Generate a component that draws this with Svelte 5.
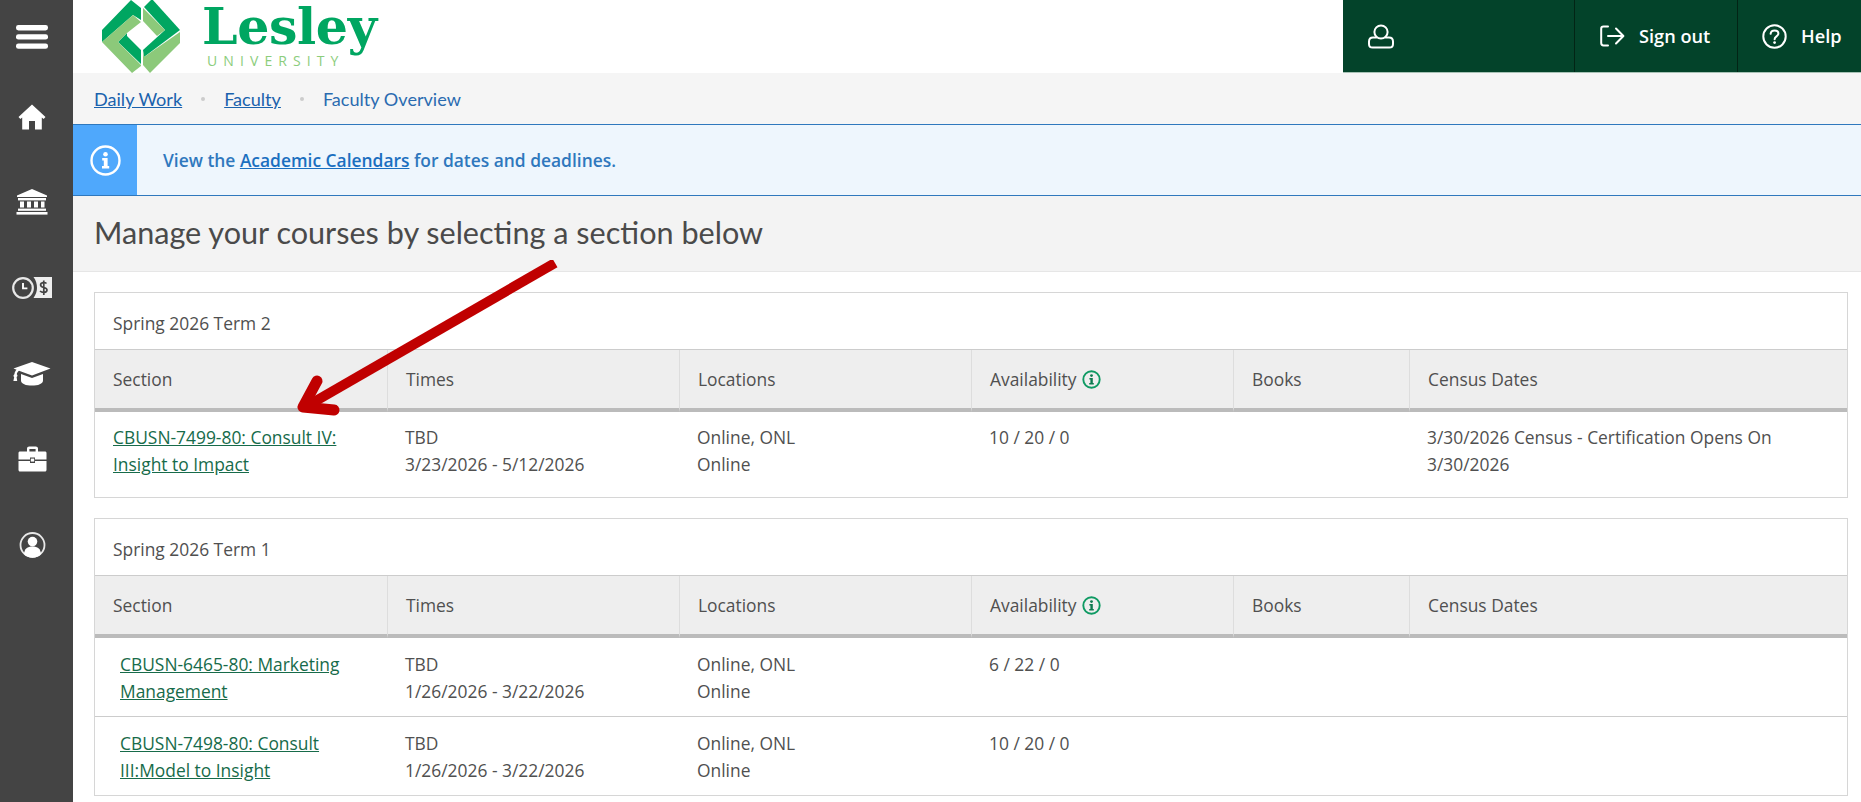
<script lang="ts">
	const terms = [
		{
			title: 'Spring 2026 Term 2',
			rows: [
				{
					section: 'CBUSN-7499-80: Consult IV: Insight to Impact',
					dates: '3/23/2026 - 5/12/2026',
					seats: '10 / 20 / 0',
					census: '3/30/2026 Census - Certification Opens On 3/30/2026'
				}
			]
		},
		{
			title: 'Spring 2026 Term 1',
			rows: [
				{
					section: 'CBUSN-6465-80: Marketing Management',
					dates: '1/26/2026 - 3/22/2026',
					seats: '6 / 22 / 0',
					census: ''
				},
				{
					section: 'CBUSN-7498-80: Consult III:Model to Insight',
					dates: '1/26/2026 - 3/22/2026',
					seats: '10 / 20 / 0',
					census: ''
				}
			]
		}
	];
</script>

<div class="page">
	<nav class="rail">
		<div class="rail-top">
			<svg width="32" height="24" viewBox="0 0 32 24" fill="#fff">
				<rect x="0" y="0" width="32" height="5.4" rx="2.4" />
				<rect x="0" y="9.2" width="32" height="5.4" rx="2.4" />
				<rect x="0" y="18.4" width="32" height="5.4" rx="2.4" />
			</svg>
		</div>
		<div class="rail-item">
			<svg width="28" height="26" viewBox="0 0 28 26" fill="#fff">
				<path d="M14 0.5 L27.5 13 L25.6 15 L23.8 13.4 V25.5 H17 V17 H11 V25.5 H4.2 V13.4 L2.4 15 L0.5 13 Z" />
			</svg>
		</div>
		<div class="rail-item">
			<svg width="32" height="26" viewBox="0 0 32 26" fill="#fff">
				<path d="M16 0 L31 6.5 V8 H1 V6.5 Z" />
				<rect x="2" y="9" width="28" height="2.4" />
				<rect x="4" y="12.5" width="4" height="6" />
				<rect x="11" y="12.5" width="4" height="6" />
				<rect x="18" y="12.5" width="4" height="6" />
				<rect x="25" y="12.5" width="3.5" height="6" />
				<rect x="2" y="19.6" width="28" height="2.2" />
				<rect x="0.5" y="23" width="31" height="2.6" />
			</svg>
		</div>
		<div class="rail-item">
			<svg width="40" height="24" viewBox="0 0 40 24">
				<circle cx="11" cy="12" r="9.8" fill="none" stroke="#e8e8e8" stroke-width="2.2" />
				<path d="M11 7 V12.4 H15.4" fill="none" stroke="#fff" stroke-width="1.9" />
				<path d="M21.5 1 H40 V22 H21.5 C24 18 25 15 25 12 C25 8 24 4 21.5 1 Z" fill="#eee" />
				<path d="M34.5 7.5 C33 6 28.6 6 28.6 9 C28.6 12.4 35 10.6 35 14 C35 17 30 17 28 15 M31.8 4.5 V19" fill="none" stroke="#444" stroke-width="1.7" />
			</svg>
		</div>
		<div class="rail-item">
			<svg width="38" height="24" viewBox="0 0 38 24" fill="#fff">
				<path d="M19 0 L37.5 6.5 L19 13.6 L6 8.8 C4.6 9.8 4 11 3.8 12.2 C4.8 13 4.6 14.6 3.6 15 L4.2 19 H0.4 L1.2 15 C0.2 14.4 0.2 13 1.4 12.2 C1.6 10.4 2.4 8.8 3.6 7.8 L0.5 6.5 Z" />
				<path d="M8 12 L19 16 L30 12 V18.4 C30 21.6 25 23.6 19 23.6 C13 23.6 8 21.6 8 18.4 Z" />
			</svg>
		</div>
		<div class="rail-item">
			<svg width="29" height="26" viewBox="0 0 29 26" fill="#fff">
				<path d="M9 6 V2.6 C9 1.4 10 0.5 11.2 0.5 H17.8 C19 0.5 20 1.4 20 2.6 V6 H17.6 V3 H11.4 V6 Z" />
				<path d="M0.5 7 C0.5 6.2 1.2 5.6 2 5.6 H27 C27.8 5.6 28.5 6.2 28.5 7 V13.4 H17 V11.6 H12 V13.4 H0.5 Z" />
				<rect x="12.8" y="12.6" width="3.4" height="3" />
				<path d="M0.5 15 H12 V17 H17 V15 H28.5 V24 C28.5 24.8 27.8 25.5 27 25.5 H2 C1.2 25.5 0.5 24.8 0.5 24 Z" />
			</svg>
		</div>
		<div class="rail-item">
			<svg width="27" height="26" viewBox="0 0 27 26">
				<circle cx="13.5" cy="13" r="12" fill="none" stroke="#e8e8e8" stroke-width="1.8" />
				<circle cx="13.5" cy="9.6" r="4.8" fill="#fff" />
				<path d="M5 22 C5.4 17 8.4 14.6 13.5 14.6 C18.6 14.6 21.6 17 22 22 C20 24.6 16.8 25.6 13.5 25.6 C10.2 25.6 7 24.6 5 22 Z" fill="#fff" />
			</svg>
		</div>
	</nav>

	<div class="content">
		<header class="topbar">
			<a class="logo" href="#top">
				<svg width="82" height="73" viewBox="100 0 82 73">
					<g fill="#00a661">
						<polygon points="102,30 131,0 141,8 141,20 133,15 102,42" />
						<polygon points="118,42 127,33 127,36 141,50 141,64" />
						<polygon points="144,7 152,-1 180,30 165,30" />
						<polygon points="165,30 180,30 144,57 143,50" />
					</g>
					<g fill="#8cc97a">
						<polygon points="102,42 133,15 141,22 127,33 118,42 141,65 141,66 132,73" />
						<polygon points="143,8 143,21 157,36 165,30" />
						<polygon points="180,32 180,43 150,73 143,65 143,52 144,57" />
					</g>
				</svg>
				<span class="wordmark">
					<span class="lesley">Lesley</span>
					<span class="university">UNIVERSITY</span>
				</span>
			</a>
			<div class="account">
				<div class="account-user">
					<svg width="26" height="26" viewBox="0 0 26 26" fill="none" stroke="#fff" stroke-width="2">
						<circle cx="13" cy="9" r="6.6" />
						<path d="M8.4 14.4 H5 C2.6 14.4 1 16 1 18.6 V21 C1 23 2.4 24.6 4.6 24.6 H21.4 C23.6 24.6 25 23 25 21 V18.6 C25 16 23.4 14.4 21 14.4 H17.6" stroke-linecap="round" />
					</svg>
				</div>
				<a class="account-btn signout" href="#top">
					<svg width="25" height="22" viewBox="0 0 25 22" fill="none" stroke="#fff" stroke-width="2" stroke-linecap="round" stroke-linejoin="round">
						<path d="M8 1.5 H3.5 C2 1.5 1.2 2.4 1.2 3.8 V18 C1.2 19.5 2 20.4 3.5 20.4 H8" />
						<path d="M8 11 H23 M16 3.5 L23.4 11 L16 18.5" />
					</svg>
					Sign out
				</a>
				<a class="account-btn help" href="#top">
					<svg width="25" height="25" viewBox="0 0 25 25" fill="none" stroke="#fff" stroke-width="2">
						<circle cx="12.5" cy="12.5" r="11.2" />
						<path d="M8.6 9.8 C8.8 7.6 10.4 6.4 12.6 6.4 C14.9 6.4 16.4 7.8 16.4 9.6 C16.4 12.4 12.6 12.4 12.6 15.2" stroke-linecap="round" />
						<circle cx="12.6" cy="18.6" r="1.4" fill="#fff" stroke="none" />
					</svg>
					Help
				</a>
			</div>
		</header>

		<div class="crumbs">
			<a href="#top">Daily Work</a>
			<span class="dot"></span>
			<a href="#top">Faculty</a>
			<span class="dot"></span>
			<span>Faculty Overview</span>
		</div>

		<div class="notice">
			<div class="notice-icon">
				<svg width="31" height="31" viewBox="0 0 31 31" fill="none">
					<circle cx="15.5" cy="15.5" r="14" stroke="#fff" stroke-width="2.4" />
					<circle cx="15.5" cy="9.2" r="2.3" fill="#fff" />
					<path d="M12.2 13 H17.6 V21 H19.2 V23.6 H12 V21 H13.8 V15.6 H12.2 Z" fill="#fff" />
				</svg>
			</div>
			<p>View the <a href="#top">Academic Calendars</a> for dates and deadlines.</p>
		</div>

		<div class="title-band">
			<h1>Manage your courses by selecting a section below</h1>
		</div>

		<main class="sections">
			{#each terms as term}
				<section class="term">
					<h2>{term.title}</h2>
					<table>
						<thead>
							<tr>
								<th class="col-section">Section</th>
								<th class="col-times">Times</th>
								<th class="col-locations">Locations</th>
								<th class="col-availability">
									<span class="with-icon">
										Availability
										<svg width="19" height="19" viewBox="0 0 19 19" fill="none">
											<circle cx="9.5" cy="9.5" r="8.2" stroke="#0f9a63" stroke-width="1.9" />
											<circle cx="9.5" cy="5.6" r="1.4" fill="#0f7a50" />
											<path d="M7.4 8 H10.8 V13 H11.8 V14.6 H7.2 V13 H8.4 V9.6 H7.4 Z" fill="#0f7a50" />
										</svg>
									</span>
								</th>
								<th class="col-books">Books</th>
								<th class="col-census">Census Dates</th>
							</tr>
						</thead>
						<tbody>
							{#each term.rows as row}
								<tr>
									<td class="cell-link"><a href="#top">{row.section}</a></td>
									<td>TBD<br />{row.dates}</td>
									<td>Online, ONL<br />Online</td>
									<td>{row.seats}</td>
									<td></td>
									<td>{row.census}</td>
								</tr>
							{/each}
						</tbody>
					</table>
				</section>
			{/each}
		</main>
	</div>

	<svg class="pointer" width="280" height="160" viewBox="0 0 280 160" fill="none" stroke="#c00000" stroke-width="10" stroke-linecap="round" stroke-linejoin="round">
		<path d="M260 3 L12 146" stroke-linecap="butt" />
		<path d="M22 121 L8 147 L39 150" stroke-width="11" />
	</svg>
</div>

<style>
	:global(body) {
		margin: 0;
		background: #fff;
		overflow: hidden;
	}

	.page {
		position: relative;
		display: flex;
		height: 802px;
		overflow: hidden;
		font-family: 'Open Sans', sans-serif;
		font-size: 17.4px;
		color: #505050;
	}

	.rail {
		flex: 0 0 73px;
		box-sizing: border-box;
		padding-right: 9px;
		display: flex;
		flex-direction: column;
		align-items: center;
		background: #444;
	}

	.rail-top {
		height: 73px;
		margin-bottom: 1px;
		display: flex;
		align-items: center;
	}

	.rail-item {
		height: 85.6px;
		display: flex;
		align-items: center;
		justify-content: center;
	}

	.content {
		flex: 1;
		min-width: 0;
		display: flex;
		flex-direction: column;
	}

	.topbar {
		flex: 0 0 73px;
		display: flex;
		justify-content: space-between;
		background: #fff;
	}

	.logo {
		display: flex;
		margin-left: 27px;
		text-decoration: none;
	}

	.wordmark {
		display: flex;
		flex-direction: column;
		margin-left: 20px;
	}

	.lesley {
		font-family: 'DejaVu Serif', serif;
		font-weight: 700;
		font-size: 50.6px;
		line-height: 52px;
		letter-spacing: -0.4px;
		color: #00a661;
	}

	.university {
		margin: 1px 0 0 5px;
		font-size: 14px;
		line-height: 16px;
		letter-spacing: 6.1px;
		color: #8ccd7c;
	}

	.account {
		width: 518px;
		display: flex;
		background: #03432a;
		border-bottom: 1px solid #a8c2b6;
		box-sizing: border-box;
		color: #fff;
	}

	.account-user {
		flex: 1;
		display: flex;
		align-items: center;
		padding-left: 25px;
	}

	.account-btn {
		display: flex;
		align-items: center;
		gap: 14px;
		border-left: 1px solid #022415;
		color: #fff;
		font-size: 18.2px;
		font-weight: 600;
		text-decoration: none;
	}

	.signout {
		width: 163px;
		box-sizing: border-box;
		padding-left: 25px;
	}

	.help {
		width: 124px;
		box-sizing: border-box;
		padding-left: 24px;
	}

	.crumbs {
		flex: 0 0 51px;
		display: flex;
		align-items: center;
		padding-left: 21px;
		background: #f5f5f5;
		font-family: Lato, sans-serif;
		font-size: 18.1px;
		color: #2a6bb0;
	}

	.crumbs a {
		color: #1a62ad;
	}

	.dot {
		width: 4px;
		height: 4px;
		margin: 0 19px;
		border-radius: 50%;
		background: #ccc;
	}

	.notice {
		flex: 0 0 72px;
		box-sizing: border-box;
		display: flex;
		align-items: stretch;
		border-top: 1px solid #2f78bd;
		border-bottom: 1px solid #2f78bd;
		background: #eef6fd;
		color: #2f78bd;
		font-weight: 600;
	}

	.notice-icon {
		flex: 0 0 64px;
		display: flex;
		align-items: center;
		justify-content: center;
		background: #4fa8fc;
	}

	.notice p {
		margin: 0;
		align-self: center;
		padding-left: 26px;
	}

	.notice a {
		color: #1a6fc0;
	}

	.title-band {
		flex: 0 0 76px;
		box-sizing: border-box;
		display: flex;
		align-items: center;
		padding: 0 0 3px 21px;
		background: #f3f3f3;
		border-bottom: 1px solid #e6e6e6;
	}

	h1 {
		margin: 0;
		font-family: Lato, sans-serif;
		font-weight: 400;
		font-size: 30.6px;
		color: #4a4a4a;
	}

	.sections {
		display: flex;
		flex-direction: column;
		gap: 20px;
		padding: 20px 13px 0 21px;
	}

	.term {
		border: 1px solid #d6d6d6;
	}

	h2 {
		margin: 0;
		height: 57px;
		box-sizing: border-box;
		padding: 18px 18px 0;
		font-size: inherit;
		font-weight: 400;
		line-height: 24px;
		border-bottom: 1px solid #ccc;
	}

	table {
		width: 100%;
		table-layout: fixed;
		border-collapse: separate;
		border-spacing: 0;
		line-height: 27px;
	}

	th {
		height: 62px;
		box-sizing: border-box;
		padding: 0 18px;
		background: #eee;
		border-left: 1px solid #ddd;
		border-bottom: 4px solid #bbb;
		font-weight: 400;
		text-align: left;
		vertical-align: middle;
	}

	th:first-child {
		border-left: 0;
	}

	.with-icon {
		display: inline-flex;
		align-items: center;
		gap: 5px;
	}

	.col-section,
	.col-times,
	.col-locations {
		width: 292px;
	}

	.col-availability {
		width: 262px;
	}

	.col-books {
		width: 176px;
	}

	td {
		padding: 13px 18px 11px;
		vertical-align: top;
	}

	.term:first-child td {
		padding: 12px 18px 19px;
	}

	tbody tr + tr td {
		border-top: 1px solid #ccc;
	}

	td.cell-link {
		padding-left: 25px;
	}

	.cell-link a {
		color: #176b4a;
	}

	.pointer {
		position: absolute;
		left: 295px;
		top: 260px;
	}
</style>
